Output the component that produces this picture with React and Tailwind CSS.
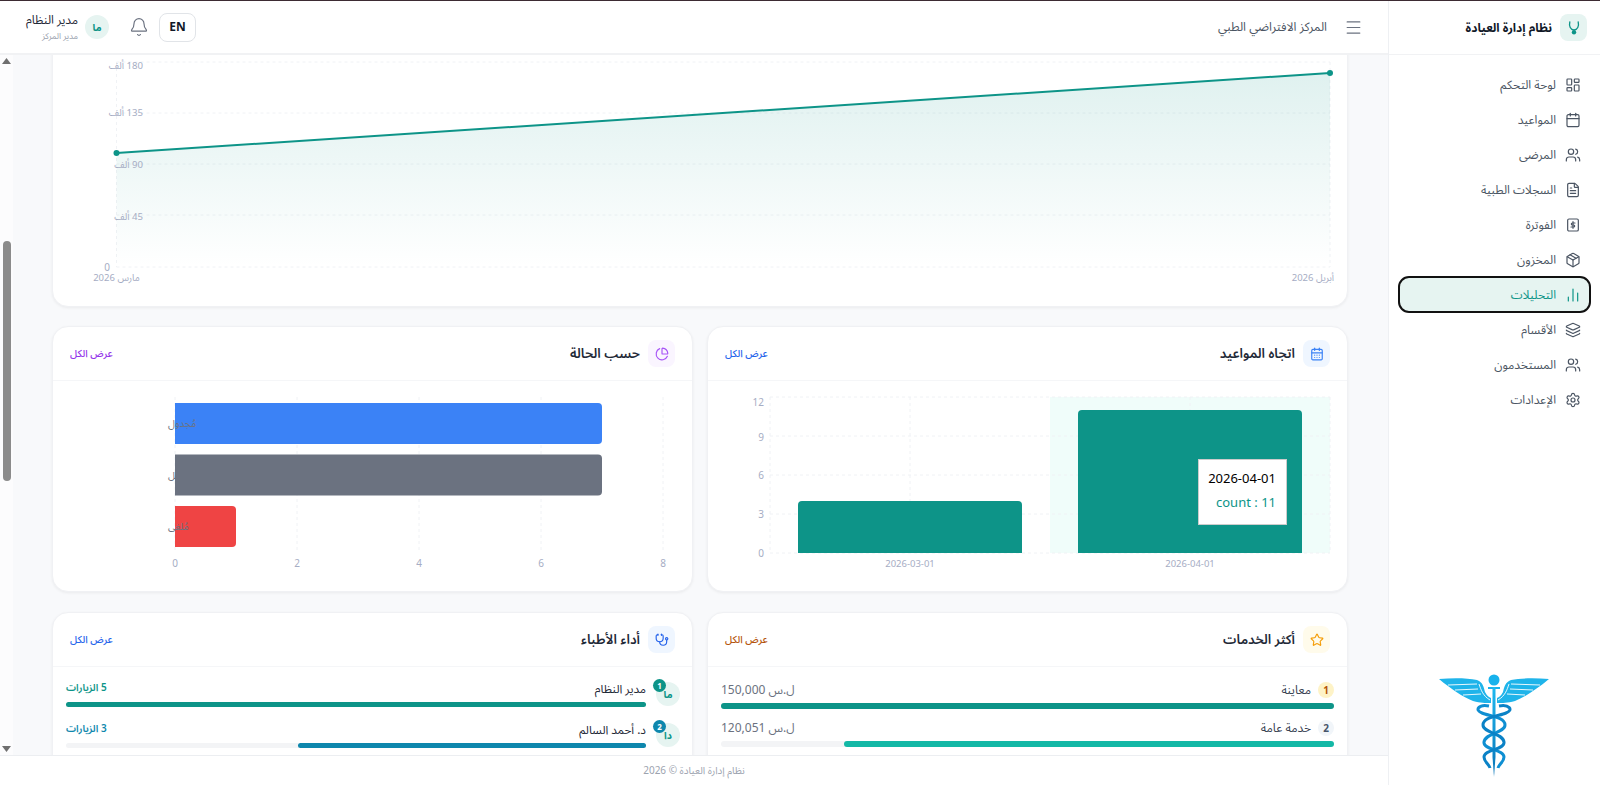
import React from "react";
import {
  LayoutDashboard,
  Calendar,
  CalendarDays,
  Users,
  FileText,
  Package,
  ChartNoAxesColumn,
  Layers,
  Settings,
  Bell,
  Menu,
  ChartPie,
  Star,
  Stethoscope,
} from "lucide-react";

const InvoiceIcon = (props) => (
  <svg viewBox="0 0 24 24" fill="none" stroke="currentColor" strokeWidth="2" strokeLinecap="round" strokeLinejoin="round" {...props}>
    <rect x="4" y="3" width="16" height="18" rx="2" />
    <path d="M12 7v10" />
    <path d="M15 9h-4a1.5 1.5 0 0 0 0 3h2a1.5 1.5 0 0 1 0 3H9" />
  </svg>
);

const navItems = [
  { label: "لوحة التحكم", icon: LayoutDashboard },
  { label: "المواعيد", icon: Calendar },
  { label: "المرضى", icon: Users },
  { label: "السجلات الطبية", icon: FileText },
  { label: "الفوترة", icon: InvoiceIcon },
  { label: "المخزون", icon: Package },
  { label: "التحليلات", icon: ChartNoAxesColumn, active: true },
  { label: "الأقسام", icon: Layers },
  { label: "المستخدمون", icon: Users },
  { label: "الإعدادات", icon: Settings },
];

const doctors = [
  { name: "مدير النظام", initials: "ما", visits: "5 الزيارات", pct: 100, bar: "bg-[#0d9488]", badge: "bg-[#0d9488]", value: "text-[#0d9488]" },
  { name: "د. أحمد السالم", initials: "دا", visits: "3 الزيارات", pct: 60, bar: "bg-[#0e87ad]", badge: "bg-[#0e87ad]", value: "text-[#0e87ad]" },
];

const services = [
  { name: "معاينة", rank: 1, amount: "ل.س 150,000", pct: 100, bar: "bg-[#0d9488]", rankCls: "bg-[#fef3c7] text-[#b45309]" },
  { name: "خدمة عامة", rank: 2, amount: "ل.س 120,051", pct: 80, bar: "bg-[#14b8a6]", rankCls: "bg-[#f1f5f9] text-[#475569]" },
];

const tickFill = "#a6adc4";
const gridStroke = "#f0f2f5";

function Caduceus() {
  return (
    <svg width="112" height="106" viewBox="0 0 112 106" fill="none">
      <defs>
        <linearGradient id="cad" x1="0" y1="0" x2="0" y2="1">
          <stop offset="0" stopColor="#1fb9f0" />
          <stop offset="1" stopColor="#0873b6" />
        </linearGradient>
      </defs>
      <circle cx="55" cy="7" r="5.5" fill="#17b2ec" />
      <rect x="49" y="14" width="12" height="2" fill="#17b2ec" />
      <path d="M53.5 14 H56.5 V84 L55 104 L53.5 84 Z" fill="url(#cad)" />
      {/* wings */}
      <path d="M0 6 C14 5 28 5 38 7 C44 9 45 15 46 19 C48 23 50 24 52 25 L52 30 C46 30 42 30 34 28 C24 24 12 16 0 6 Z" fill="#1fb4ea" />
      <path d="M9 12 L38 11 M16 17 L39 16 M24 22 L42 21 M40 11 C42 17 44 23 51 27" stroke="#fff" strokeWidth="0.9" />
      <path d="M110 6 C96 5 82 5 72 7 C66 9 65 15 64 19 C62 23 60 24 58 25 L58 30 C64 30 68 30 76 28 C86 24 98 16 110 6 Z" fill="#1fb4ea" />
      <path d="M101 12 L72 11 M94 17 L71 16 M86 22 L68 21 M70 11 C68 17 66 23 59 27" stroke="#fff" strokeWidth="0.9" />
      {/* snakes */}
      <path d="M50 33 C40 31 35 37 43 40 C50 43 66 44 66 52 C66 60 46 60 45 69 C44 77 65 76 65 84 C65 89 60 91 59 95" stroke="#0f8fd2" strokeWidth="3" />
      <path d="M60 33 C70 31 75 37 67 40 C60 43 44 44 44 52 C44 60 64 60 65 69 C66 77 45 76 45 84 C45 89 50 91 51 95" stroke="#0b82c6" strokeWidth="3" />
    </svg>
  );
}

function Sidebar() {
  return (
    <aside className="flex w-[212px] shrink-0 flex-col border-l border-[#eef0f3] bg-white">
      <div className="flex h-[54px] shrink-0 items-center gap-[8px] border-b border-[#f1f2f4] pr-[13px]">
        <div className="flex h-[27px] w-[27px] items-center justify-center rounded-lg bg-[#e6f4f1]">
          <svg width="16" height="16" viewBox="0 0 16 16" fill="none">
            <path d="M3.8 2 C2.8 6 4.5 10 8 10 C11.5 10 13.2 6 12.2 2" stroke="#0d9488" strokeWidth="1.3" strokeLinecap="round" />
            <circle cx="8" cy="12.2" r="2.2" fill="#0d9488" />
          </svg>
        </div>
        <span className="text-[12px] font-bold text-[#111827]">نظام إدارة العيادة</span>
      </div>
      <nav className="flex flex-col pt-[12px]">
        {navItems.map((item) => {
          const Icon = item.icon;
          return (
            <a
              key={item.label}
              className={
                item.active
                  ? "mx-[10px] flex h-[35px] items-center gap-[9px] rounded-[10px] bg-[#e6f4f1] pr-[9px] text-[12px] text-[#0d9488] outline-2 -outline-offset-1 outline-[#111]"
                  : "mx-[10px] flex h-[35px] items-center gap-[9px] pr-[9px] text-[12px] text-[#4b5563]"
              }
            >
              <Icon className="h-[16px] w-[16px] shrink-0" strokeWidth={1.8} />
              <span>{item.label}</span>
            </a>
          );
        })}
      </nav>
      <div className="mt-auto flex justify-center pb-[6px]">
        <Caduceus />
      </div>
    </aside>
  );
}

function Header() {
  return (
    <header className="flex h-[54px] shrink-0 items-center justify-between border-b-2 border-[#f1f2f4] bg-white pr-[25px] pl-[26px]">
      <div className="flex items-center gap-[17px]">
        <Menu className="h-[19px] w-[19px] text-[#6b7280]" strokeWidth={1.5} />
        <span className="text-[12.2px] text-[#4b5563]">المركز الافتراضي الطبي</span>
      </div>
      <div className="flex items-center">
        <button className="flex h-[29px] w-[37px] items-center justify-center rounded-lg border border-[#e1e4e8] text-[12px] font-bold text-[#111827]">
          EN
        </button>
        <Bell className="mr-[10px] h-[20px] w-[20px] text-[#6b7280]" strokeWidth={1.4} />
        <div className="mr-[20px] flex items-center gap-[7px]">
          <div className="flex h-[24px] w-[24px] items-center justify-center rounded-full bg-[#e6f4f1] text-[10px] font-bold text-[#0d9488]">
            ما
          </div>
          <div className="flex flex-col items-start pb-[2px]">
            <span className="text-[12px] leading-[19px] text-[#1f2937]">مدير النظام</span>
            <span className="text-[8.5px] leading-[14px] text-[#9ca3af]">مدير المركز</span>
          </div>
        </div>
      </div>
    </header>
  );
}

function CardHeader({ title, icon: Icon, iconCls, boxCls, linkCls }) {
  return (
    <div className="flex h-[54px] items-center justify-between border-b border-[#f5f6f8] pr-[17px] pl-[17px]">
      <div className="flex items-center gap-[8px]">
        <div className={"flex h-[27px] w-[27px] items-center justify-center rounded-lg " + boxCls}>
          <Icon className={"h-[14px] w-[14px] " + iconCls} strokeWidth={2} />
        </div>
        <h3 className="text-[13.3px] font-semibold text-[#1f2937]">{title}</h3>
      </div>
      <a className={"text-[10px] font-medium " + linkCls}>عرض الكل</a>
    </div>
  );
}

function RevenueChart() {
  const ys = [
    [62, "180 ألف", 65],
    [113, "135 ألف", 112],
    [164, "90 ألف", 164],
    [215, "45 ألف", 216],
  ];
  return (
    <svg width="1294" height="251" viewBox="53 55 1294 251" className="block">
      <defs>
        <linearGradient id="area" x1="0" y1="0" x2="0" y2="1">
          <stop offset="0" stopColor="#0d9488" stopOpacity="0.13" />
          <stop offset="1" stopColor="#0d9488" stopOpacity="0" />
        </linearGradient>
      </defs>
      {ys.map(([y]) => (
        <line key={y} x1="116.5" x2="1330" y1={y} y2={y} stroke={gridStroke} strokeDasharray="3 3" />
      ))}
      <line x1="116.5" x2="1330" y1="267" y2="267" stroke={gridStroke} strokeDasharray="3 3" />
      <line x1="116.5" x2="116.5" y1="62" y2="267" stroke={gridStroke} strokeDasharray="3 3" />
      <line x1="1330" x2="1330" y1="62" y2="267" stroke={gridStroke} strokeDasharray="3 3" />
      <path d="M116.5 153 L1330 73 L1330 267 L116.5 267 Z" fill="url(#area)" />
      <path d="M116.5 153 L1330 73" stroke="#0d9488" strokeWidth="2" />
      <circle cx="116.5" cy="153" r="3" fill="#0d9488" />
      <circle cx="1330" cy="73" r="3" fill="#0d9488" />
      {ys.map(([y, label, ty]) => (
        <text key={label} x="143" y={ty + 3.5} textAnchor="start" direction="rtl" fontSize="9.6" fill={tickFill}>
          {label}
        </text>
      ))}
      <text x="110" y="271" fontSize="10" fill={tickFill}>0</text>
      <text x="116.5" y="281" textAnchor="middle" fontSize="9.5" fill={tickFill}>مارس 2026</text>
      <text x="1334" y="281" textAnchor="start" direction="rtl" fontSize="9.5" fill={tickFill}>أبريل 2026</text>
    </svg>
  );
}

function TrendChart() {
  const rows = [
    [397, "12", 402],
    [436, "9", 437],
    [475, "6", 475],
    [514, "3", 514],
    [553, "0", 553],
  ];
  return (
    <div className="relative">
      <svg width="640" height="211" viewBox="707 381 640 211" className="block">
        <rect x="1050" y="397" width="280" height="156" fill="#f0fdfa" />
        {rows.map(([y]) => (
          <line key={y} x1="770" x2="1330" y1={y} y2={y} stroke={gridStroke} strokeDasharray="3 3" />
        ))}
        {[770, 910, 1190, 1330].map((x) => (
          <line key={x} x1={x} x2={x} y1="397" y2="553" stroke={gridStroke} strokeDasharray="3 3" />
        ))}
        <path d="M798 553 V505 a4 4 0 0 1 4 -4 H1018 a4 4 0 0 1 4 4 V553 Z" fill="#0d9488" />
        <path d="M1078 553 V414 a4 4 0 0 1 4 -4 H1298 a4 4 0 0 1 4 4 V553 Z" fill="#0d9488" />
        {rows.map(([, label, ty]) => (
          <text key={label} x="764" y={ty + 3.5} fontSize="10" fill={tickFill}>{label}</text>
        ))}
        <text x="910" y="566.5" textAnchor="middle" fontSize="9.5" fill={tickFill}>2026-03-01</text>
        <text x="1190" y="566.5" textAnchor="middle" fontSize="9.5" fill={tickFill}>2026-04-01</text>
      </svg>
      <div className="absolute top-[78px] left-[490px] flex h-[66px] w-[89px] flex-col justify-center gap-[3px] border border-[#ccc] bg-white pr-[10px] pb-[3px] text-right text-[13px] leading-[21px] whitespace-nowrap">
        <span className="text-black">2026-04-01</span>
        <span className="text-[#0d9488]">count : 11</span>
      </div>
    </div>
  );
}

function StatusChart() {
  const bars = [
    { y: 403, w: 427, fill: "#3b82f6", label: "مُجدول" },
    { y: 454.5, w: 427, fill: "#6b7280", label: "مكتمل" },
    { y: 506, w: 61, fill: "#ef4444", label: "مُلغى" },
  ];
  return (
    <svg width="640" height="211" viewBox="52 381 640 211" className="block">
      {[175, 297, 419, 541, 663].map((x, i) => (
        <g key={x}>
          <line x1={x} x2={x} y1="397" y2="552" stroke={gridStroke} strokeDasharray="3 3" />
          <text x={x} y="566.5" textAnchor="middle" fontSize="10" fill={tickFill}>{i * 2}</text>
        </g>
      ))}
      {bars.map((b) => (
        <g key={b.label}>
          <path d={`M175 ${b.y} H${171 + b.w} a4 4 0 0 1 4 4 V${b.y + 37} a4 4 0 0 1 -4 4 H175 Z`} fill={b.fill} />
          <text x="168" y={b.y + 24} textAnchor="end" direction="rtl" fontSize="10" fill="#6b7280">{b.label}</text>
        </g>
      ))}
    </svg>
  );
}

function DoctorsList() {
  return (
    <div className="flex flex-col gap-[15px] pt-[14px] pr-[12px] pl-[13px]">
      {doctors.map((d, i) => (
        <div key={d.name} className="flex items-center gap-[10px]">
          <div className="relative flex h-[24px] w-[24px] shrink-0 items-center justify-center rounded-full bg-[#e6f4f1] text-[10px] font-bold text-[#0d9488]">
            {d.initials}
            <span className={"absolute -top-[3px] -left-[3px] flex h-[13px] w-[13px] items-center justify-center rounded-full text-[8px] font-bold text-white " + d.badge}>
              {i + 1}
            </span>
          </div>
          <div className="min-w-0 flex-1">
            <div className="flex h-[21px] justify-between">
              <span className="text-[11.8px] leading-[15px] text-[#1f2937]">{d.name}</span>
              <span className={"text-[10px] leading-[13px] font-semibold " + d.value}>{d.visits}</span>
            </div>
            <div className="h-[5px] rounded-full bg-[#f3f4f6]">
              <div className={"h-full rounded-full " + d.bar} style={{ width: d.pct + "%" }} />
            </div>
          </div>
        </div>
      ))}
    </div>
  );
}

function ServicesList() {
  return (
    <div className="flex flex-col gap-[11px] pt-[15px] pr-[13px] pl-[13px]">
      {services.map((s) => (
        <div key={s.name}>
          <div className="flex h-[16px] items-center justify-between">
            <div className="flex items-center gap-[7px]">
              <span className={"flex h-[16px] w-[16px] items-center justify-center rounded-full text-[10px] font-bold " + s.rankCls}>
                {s.rank}
              </span>
              <span className="text-[12px] text-[#374151]">{s.name}</span>
            </div>
            <span className="text-[12px] text-[#6b7280]">{s.amount}</span>
          </div>
          <div className="mt-[5px] h-[6px] rounded-full bg-[#f3f4f6]">
            <div className={"h-full rounded-full " + s.bar} style={{ width: s.pct + "%" }} />
          </div>
        </div>
      ))}
    </div>
  );
}

function Scrollbar() {
  return (
    <div className="flex w-[13px] shrink-0 flex-col items-center bg-[#fcfcfd] pt-[3px] pb-[3px]">
      <svg width="9" height="6" viewBox="0 0 9 6" className="shrink-0"><path d="M4.5 0 L9 6 H0 Z" fill="#6f6f6f" /></svg>
      <div className="mt-[177px] h-[240px] w-[8px] shrink-0 rounded-full bg-[#8b8b8b]" />
      <svg width="9" height="6" viewBox="0 0 9 6" className="mt-auto shrink-0"><path d="M4.5 6 L9 0 H0 Z" fill="#6f6f6f" /></svg>
    </div>
  );
}

const cardCls = "overflow-hidden rounded-2xl border border-[#f0f1f4] bg-white shadow-[0_1px_3px_rgba(0,0,0,0.06)]";

export default function App() {
  return (
    <div dir="rtl" className="flex h-screen overflow-hidden border-t border-[#3d2b33] bg-white font-['Noto_Sans','Noto_Sans_Arabic',sans-serif]">
      <Sidebar />
      <div className="flex min-w-0 flex-1 flex-col">
        <Header />
        <div className="flex min-h-0 flex-1">
          <main className="min-w-0 flex-1 overflow-hidden bg-[#f8f9fb] pr-[40px] pl-[39px]">
            <div className={"-mt-[21px] pt-[20px] " + cardCls}>
              <RevenueChart />
            </div>
            <div className="mt-[19px] grid grid-cols-2 gap-x-[14px] gap-y-[20px]">
              <section className={"h-[266px] " + cardCls}>
                <CardHeader title="اتجاه المواعيد" icon={CalendarDays} iconCls="text-[#3b82f6]" boxCls="bg-[#eff6ff]" linkCls="text-[#2563eb]" />
                <TrendChart />
              </section>
              <section className={"h-[266px] " + cardCls}>
                <CardHeader title="حسب الحالة" icon={ChartPie} iconCls="text-[#a855f7]" boxCls="bg-[#faf5ff]" linkCls="text-[#9333ea]" />
                <StatusChart />
              </section>
              <section className={"h-[300px] " + cardCls}>
                <CardHeader title="أكثر الخدمات" icon={Star} iconCls="text-[#f59e0b]" boxCls="bg-[#fffbeb]" linkCls="text-[#b45309]" />
                <ServicesList />
              </section>
              <section className={"h-[300px] " + cardCls}>
                <CardHeader title="أداء الأطباء" icon={Stethoscope} iconCls="text-[#2563eb]" boxCls="bg-[#eff6ff]" linkCls="text-[#2563eb]" />
                <DoctorsList />
              </section>
            </div>
          </main>
          <Scrollbar />
        </div>
        <footer className="flex h-[30px] shrink-0 items-center justify-center border-t border-[#eceef1] bg-white text-[10px] text-[#9ca3af]">
          نظام إدارة العيادة © 2026
        </footer>
      </div>
    </div>
  );
}
